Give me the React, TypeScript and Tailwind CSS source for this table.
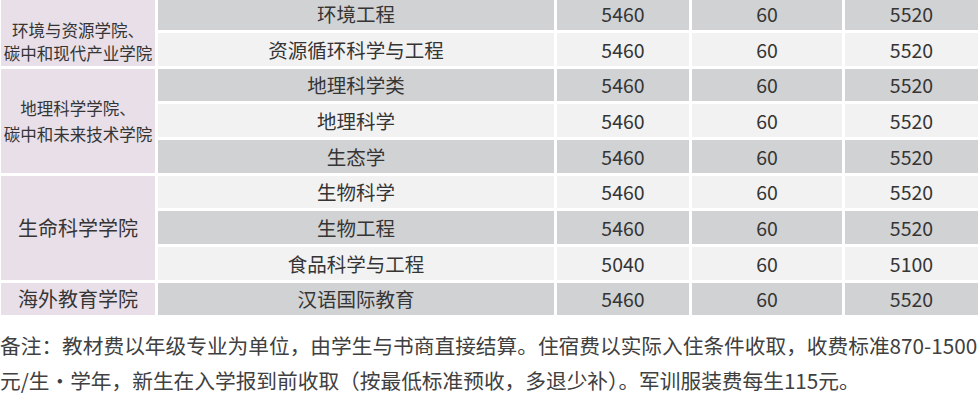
import React from 'react';

type Row = { major: string; tuition: string; books: string; total: string };

const groups: { name: string[]; rows: Row[]; cls: string }[] = [
  {
    name: ['环境与资源学院、', '碳中和现代产业学院'],
    cls: 'text-[16.5px] leading-[23px] pt-[22px]',
    rows: [
      { major: '环境工程', tuition: '5460', books: '60', total: '5520' },
      { major: '资源循环科学与工程', tuition: '5460', books: '60', total: '5520' },
    ],
  },
  {
    name: ['地理科学学院、', '碳中和未来技术学院'],
    cls: 'text-[16.5px] leading-[26px]',
    rows: [
      { major: '地理科学类', tuition: '5460', books: '60', total: '5520' },
      { major: '地理科学', tuition: '5460', books: '60', total: '5520' },
      { major: '生态学', tuition: '5460', books: '60', total: '5520' },
    ],
  },
  {
    name: ['生命科学学院'],
    cls: 'text-[20px]',
    rows: [
      { major: '生物科学', tuition: '5460', books: '60', total: '5520' },
      { major: '生物工程', tuition: '5460', books: '60', total: '5520' },
      { major: '食品科学与工程', tuition: '5040', books: '60', total: '5100' },
    ],
  },
  {
    name: ['海外教育学院'],
    cls: 'text-[20px]',
    rows: [{ major: '汉语国际教育', tuition: '5460', books: '60', total: '5520' }],
  },
];

const spanCls: Record<number, string> = {
  1: 'row-span-1',
  2: 'row-span-2',
  3: 'row-span-3',
};

export default function App() {
  let idx = 0;
  return (
    <div
      className="w-[978px] h-[404px] overflow-hidden bg-white text-[#353535]"
      style={{ fontFamily: '"Noto Sans CJK SC", "Noto Sans", sans-serif' }}
    >
      <div className="-mt-[2.7px] pl-[1px] grid grid-cols-[154px_396px_132px_150px_133px] grid-rows-[repeat(9,32.5px)] gap-x-[3px] gap-y-[3.2px]">
        {groups.map((g) => {
          const cells = g.rows.map((r, i) => {
            const bg = idx % 2 === 0 ? 'bg-[#d1d2d4]' : 'bg-[#f2f2f2]';
            idx++;
            return (
              <React.Fragment key={r.major}>
                {i === 0 && (
                  <div
                    className={`col-start-1 ${spanCls[g.rows.length]} bg-[#e8dfe8] flex flex-col items-center justify-center whitespace-nowrap ${g.cls}`}
                  >
                    {g.name.map((n) => (
                      <span key={n}>{n}</span>
                    ))}
                  </div>
                )}
                <div className={`col-start-2 ${bg} flex items-center justify-center text-[19.5px]`}>
                  {r.major}
                </div>
                <div className={`col-start-3 ${bg} flex items-center justify-center text-[19.5px]`}>
                  {r.tuition}
                </div>
                <div className={`col-start-4 ${bg} flex items-center justify-center text-[19.5px]`}>
                  {r.books}
                </div>
                <div className={`col-start-5 ${bg} flex items-center justify-center text-[19.5px]`}>
                  {r.total}
                </div>
              </React.Fragment>
            );
          });
          return <React.Fragment key={g.name[0]}>{cells}</React.Fragment>;
        })}
      </div>
      <p className="mt-[12.5px] text-[20.7px] leading-[35px] text-[#404040] whitespace-nowrap">
        备注：教材费以年级专业为单位，由学生与书商直接结算。住宿费以实际入住条件收取，收费标准870-1500
        <br />
        元/生·学年，新生在入学报到前收取（按最低标准预收，多退少补）。军训服装费每生115元。
      </p>
    </div>
  );
}
